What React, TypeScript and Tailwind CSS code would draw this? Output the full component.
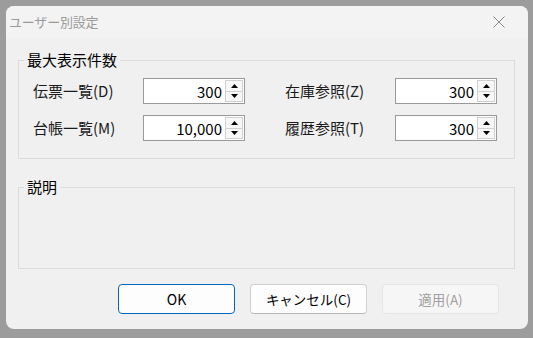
import React from "react";

const font = { fontFamily: '"Noto Sans CJK JP", "Noto Sans", sans-serif' };

function Spin({ value }: { value: string }) {
  return (
    <div className="flex h-[26px] w-[102px] items-stretch border border-[#9a9a9a] bg-white">
      <div className="flex flex-1 items-center justify-end pr-[3px] text-[15px] leading-none text-black">
        {value}
      </div>
      <div className="flex w-[19px] flex-col py-[1px] pr-[1px]">
        <div className="flex flex-1 items-center justify-center border border-[#d0d0d0] bg-[#f7f7f7]">
          <svg width="7" height="4" viewBox="0 0 7 4">
            <polygon points="0,4 7,4 3.5,0" fill="#000" />
          </svg>
        </div>
        <div className="flex flex-1 items-center justify-center border border-t-0 border-[#d0d0d0] bg-[#f7f7f7]">
          <svg width="7" height="4" viewBox="0 0 7 4">
            <polygon points="0,0 7,0 3.5,4" fill="#000" />
          </svg>
        </div>
      </div>
    </div>
  );
}

export default function App() {
  return (
    <div className="h-[338px] w-[533px] bg-[#9c9c9c] pl-[6px] pt-[6px]" style={font}>
      <div className="flex h-[323px] w-[522px] flex-col overflow-hidden rounded-[8px] bg-[#f0f0f0]">
        <div className="flex h-[32px] items-center justify-between bg-[#f3f3f3] pl-[3px] pr-[23px]">
          <span className="text-[13px] tracking-[-0.2px] text-[#9a9a9a]">ユーザー別設定</span>
          <svg width="12" height="12" viewBox="0 0 12 12">
            <path d="M0.5 0.5 L11.5 11.5 M11.5 0.5 L0.5 11.5" stroke="#8a8a8a" strokeWidth="1" />
          </svg>
        </div>

        <fieldset className="ml-[12px] mt-[12px] h-[109px] w-[497px] rounded-none border border-[#dcdcdc]">
          <legend className="ml-[5px] px-[3px] text-[15px] leading-[20px] text-black">最大表示件数</legend>
          <div className="grid grid-cols-[110px_102px_40px_110px_102px] gap-y-[11px] pl-[14px] pt-[8px]">
            <div className="flex items-center text-[15px] text-[#1a1a1a]">伝票一覧(D)</div>
            <Spin value="300" />
            <div />
            <div className="flex items-center text-[15px] text-[#1a1a1a]">在庫参照(Z)</div>
            <Spin value="300" />
            <div className="flex items-center text-[15px] text-[#1a1a1a]">台帳一覧(M)</div>
            <Spin value="10,000" />
            <div />
            <div className="flex items-center text-[15px] text-[#1a1a1a]">履歴参照(T)</div>
            <Spin value="300" />
          </div>
        </fieldset>

        <fieldset className="ml-[12px] mt-[18px] h-[92px] w-[497px] rounded-none border border-[#dcdcdc]">
          <legend className="ml-[5px] px-[3px] text-[15px] leading-[20px] text-black">説明</legend>
        </fieldset>

        <div className="mr-[29px] mt-[15px] flex justify-end gap-[15px]">
          <button className="h-[30px] w-[117px] rounded-[4px] border border-[#0067c0] bg-[#fdfdfd] text-[14px] text-black">
            OK
          </button>
          <button className="h-[30px] w-[117px] rounded-[4px] border border-[#d0d0d0] border-b-[#b8b8b8] bg-[#fdfdfd] text-[13.5px] text-black">
            キャンセル(C)
          </button>
          <button className="h-[30px] w-[117px] rounded-[4px] border border-[#e5e5e5] bg-[#f6f6f6] text-[13.5px] text-[#a0a0a0]">
            適用(A)
          </button>
        </div>
      </div>
    </div>
  );
}
